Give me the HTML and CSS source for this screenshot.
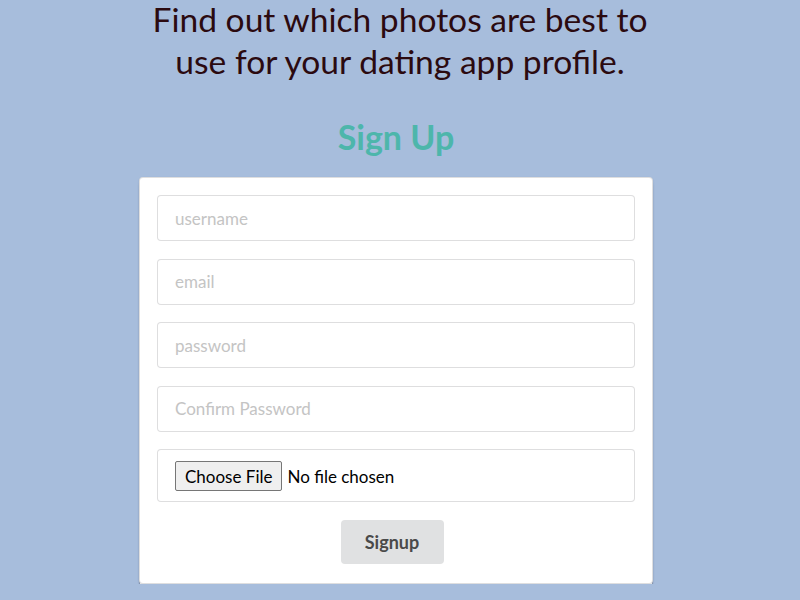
FILE: index.html
```html
<!DOCTYPE html>
<html>
<head>
<meta charset="utf-8">
<link rel="stylesheet" href="styles.css">
</head>
<body>
<main class="page">
  <h1 class="tagline">Find out which photos are best to<br>use for your dating app profile.</h1>
  <h2 class="title">Sign Up</h2>
  <form class="card">
    <div class="field"><input class="input" type="text" placeholder="username"></div>
    <div class="field"><input class="input" type="text" placeholder="email"></div>
    <div class="field"><input class="input" type="password" placeholder="password"></div>
    <div class="field"><input class="input" type="password" placeholder="Confirm Password"></div>
    <div class="field"><input class="input file" type="file"></div>
    <div class="actions"><button class="btn" type="button">Signup</button></div>
  </form>
</main>
</body>
</html>
```
FILE: styles.css
```css
html, body {
  margin: 0;
  padding: 0;
  background: #a7bddc;
  font-family: Lato, "Open Sans", sans-serif;
}
.page {
  display: flex;
  flex-direction: column;
  align-items: center;
}
.tagline {
  margin: -2px 0 0;
  font-weight: 400;
  font-size: 33.6px;
  line-height: 42px;
  color: #2b0a10;
  text-align: center;
}
.title {
  margin: 35px 0 0 -8px;
  font-size: 34px;
  line-height: 40px;
  font-weight: 700;
  color: #4db6ab;
}
.card {
  margin: 20px 8px 0 0;
  width: 514px;
  box-sizing: border-box;
  background: #fff;
  border: 1px solid rgba(34,36,38,.15);
  border-radius: 4px;
  padding: 17px 17px 19px;
  box-shadow: 0 1px 2px rgba(34,36,38,.15), 0 4px 0 -1px #fff, 0 4px 0 0 rgba(34,36,38,.15), 0 6px 3px -1px rgba(34,36,38,.2);
  display: flex;
  flex-direction: column;
  gap: 17.5px;
}
.field { display: flex; }
.input {
  flex: 1;
  height: 46px;
  box-sizing: border-box;
  border: 1px solid rgba(34,36,38,.15);
  border-radius: 4px;
  padding: 0 17px;
  font-family: Lato, sans-serif;
  font-size: 17px;
  color: #333;
  outline: none;
  background: #fff;
}
.input::placeholder { color: #c4c4c4; }
.file {
  height: 53px;
  padding: 11px 17px 0;
  color: #000;
}
.file::file-selector-button {
  font-family: Lato, sans-serif;
  font-size: 17px;
  color: #000;
  background: #efefef;
  border: 1px solid #767676;
  border-radius: 2px;
  padding: 2px 9px;
  margin-right: 5px;
  height: 30px;
}
.actions {
  display: flex;
  justify-content: center;
  padding-right: 8px;
}
.btn {
  width: 103px;
  height: 44px;
  border: none;
  border-radius: 4px;
  background: #e0e1e2;
  color: #4a4a4a;
  font-family: Lato, sans-serif;
  font-weight: 700;
  font-size: 18px;
}
```
